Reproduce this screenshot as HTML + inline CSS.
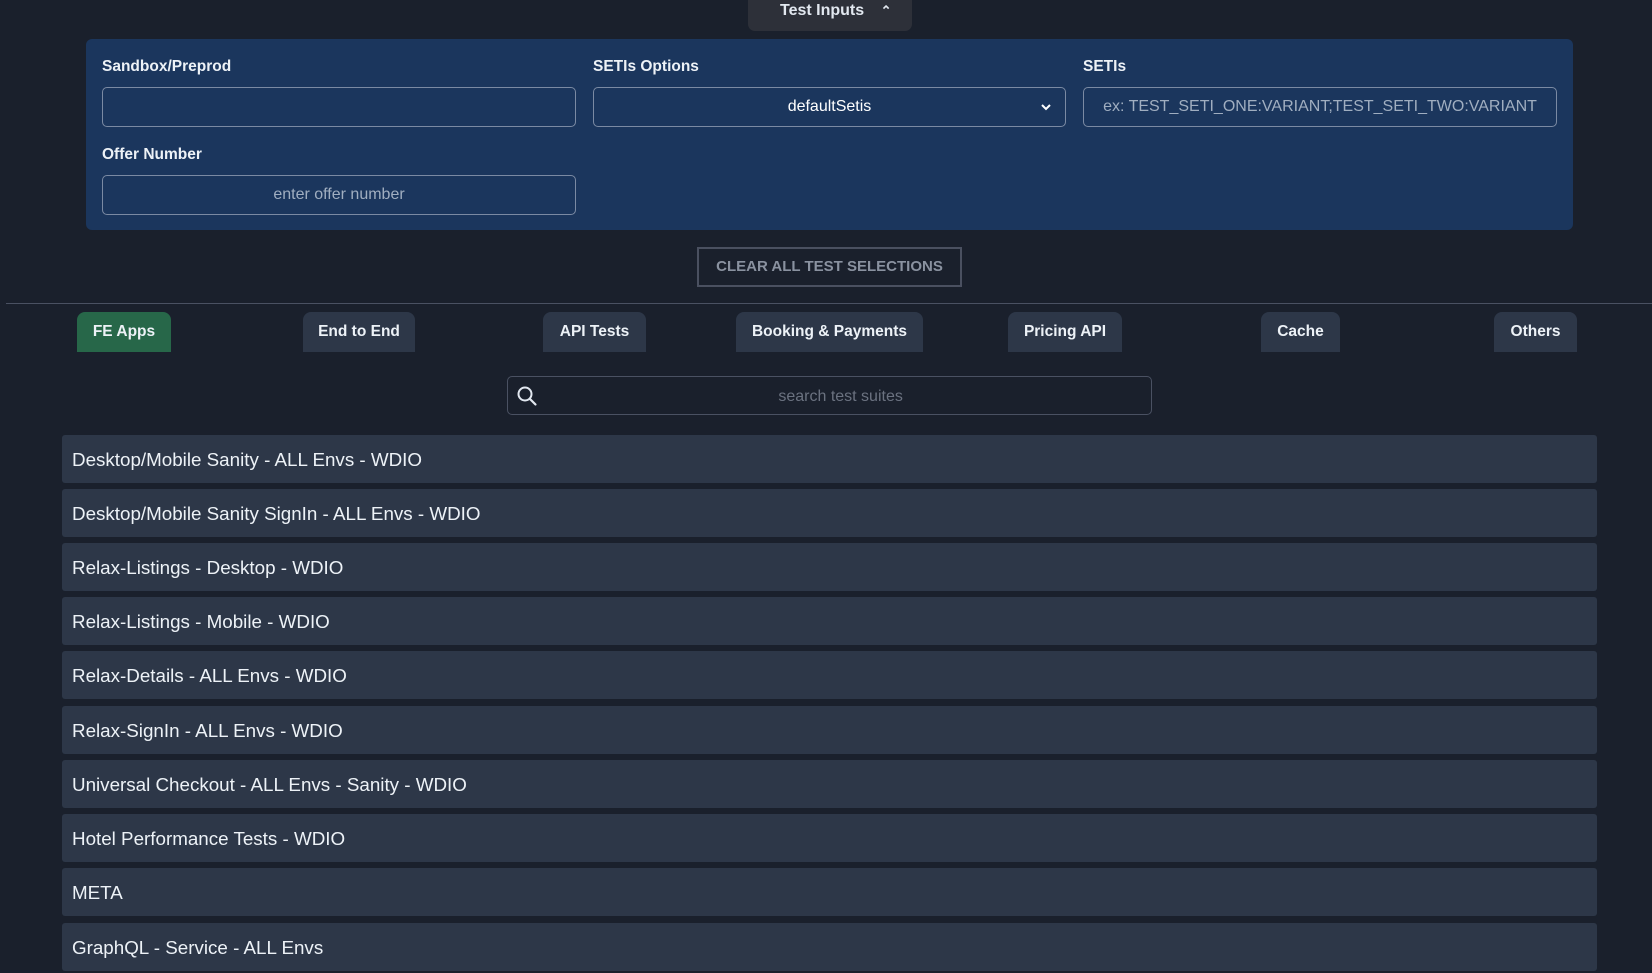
<!DOCTYPE html>
<html><head><meta charset="utf-8"><style>
*{box-sizing:border-box;margin:0;padding:0}
body{width:1652px;height:962px;overflow:hidden;background:#1a202c;font-family:"Liberation Sans",sans-serif;color:#e2e8f0;position:relative}
.abs{position:absolute}
.toptab{left:748px;top:0;width:164px;height:31px;background:#2d3039;border-radius:0 0 7px 7px;font-size:16px;font-weight:bold;color:#e2e8f0;line-height:22px;padding-left:32px}
.panel{left:86px;top:39px;width:1487px;height:191px;background:#1b365d;border-radius:6px}
.lbl{font-size:15.5px;font-weight:bold;color:#edf2f7}
.inp{height:40px;border:1px solid #7b8aa3;border-radius:5px;font-size:16px;color:#a0aec0;text-align:center;line-height:38px}
.clear{left:697px;top:247px;width:265px;height:40px;border:2px solid #4a5060;font-size:15px;font-weight:bold;color:#8a92a0;text-align:center;line-height:36px}
.hr{left:6px;top:303px;width:1646px;height:1px;background:#4a5162}
.tab{top:312px;height:40px;background:#2d3748;border-radius:8px 8px 0 0;font-size:15.5px;font-weight:bold;color:#edf2f7;text-align:center;line-height:40px}
.search{left:507px;top:376px;width:645px;height:39px;border:1px solid #4a5162;border-radius:5px;font-size:16px;color:#6b7280;text-align:center;line-height:39px}
.item{left:62px;width:1535px;height:48px;background:#2d3748;border-radius:3px;font-size:18.8px;color:#edf2f7;line-height:50px;padding-left:10px}
</style></head><body>
<div class="abs toptab">Test Inputs <span style="font-size:13px;margin-left:12px">&#8963;</span></div>
<div class="abs panel"></div>
<div class="abs lbl" style="left:102px;top:58px">Sandbox/Preprod</div>
<div class="abs lbl" style="left:593px;top:58px">SETIs Options</div>
<div class="abs lbl" style="left:1083px;top:58px">SETIs</div>
<div class="abs inp" style="left:102px;top:87px;width:474px"></div>
<div class="abs inp" style="left:593px;top:87px;width:473px;color:#fff">defaultSetis</div>
<svg class="abs" style="left:1040px;top:101px" width="12" height="12" viewBox="0 0 12 12"><path d="M2 4l4 4 4-4" stroke="#fff" stroke-width="2" fill="none"/></svg>
<div class="abs inp" style="left:1083px;top:87px;width:474px">ex: TEST_SETI_ONE:VARIANT;TEST_SETI_TWO:VARIANT</div>
<div class="abs lbl" style="left:102px;top:146px">Offer Number</div>
<div class="abs inp" style="left:102px;top:175px;width:474px">enter offer number</div>
<div class="abs clear">CLEAR ALL TEST SELECTIONS</div>
<div class="abs hr"></div>
<div class="abs tab" style="left:77px;width:94px;background:#276749">FE Apps</div>
<div class="abs tab" style="left:303px;width:112px">End to End</div>
<div class="abs tab" style="left:543px;width:103px">API Tests</div>
<div class="abs tab" style="left:736px;width:187px">Booking &amp; Payments</div>
<div class="abs tab" style="left:1008px;width:114px">Pricing API</div>
<div class="abs tab" style="left:1261px;width:79px">Cache</div>
<div class="abs tab" style="left:1494px;width:83px">Others</div>
<div class="abs search">&nbsp;&nbsp;&nbsp;&nbsp;&nbsp;search test suites</div>
<svg class="abs" style="left:516px;top:385px" width="22" height="22" viewBox="0 0 22 22"><circle cx="9" cy="9" r="6.5" stroke="#e2e8f0" stroke-width="2" fill="none"/><path d="M14 14l5.5 5.5" stroke="#e2e8f0" stroke-width="2.2" stroke-linecap="round"/></svg>
<div class="abs item" style="top:435px">Desktop/Mobile Sanity - ALL Envs - WDIO</div>
<div class="abs item" style="top:489px">Desktop/Mobile Sanity SignIn - ALL Envs - WDIO</div>
<div class="abs item" style="top:543px">Relax-Listings - Desktop - WDIO</div>
<div class="abs item" style="top:597px">Relax-Listings - Mobile - WDIO</div>
<div class="abs item" style="top:651px">Relax-Details - ALL Envs - WDIO</div>
<div class="abs item" style="top:706px">Relax-SignIn - ALL Envs - WDIO</div>
<div class="abs item" style="top:760px">Universal Checkout - ALL Envs - Sanity - WDIO</div>
<div class="abs item" style="top:814px">Hotel Performance Tests - WDIO</div>
<div class="abs item" style="top:868px">META</div>
<div class="abs item" style="top:923px">GraphQL - Service - ALL Envs</div>
</body></html>
